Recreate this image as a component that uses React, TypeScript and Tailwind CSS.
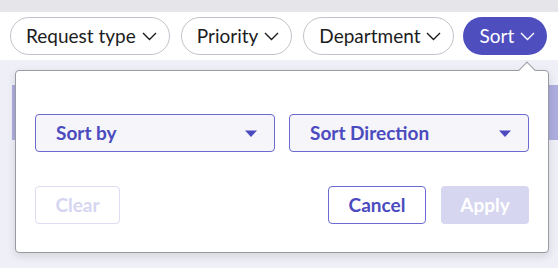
const filters = ["Request type", "Priority", "Department"];

function Chevron() {
  return (
    <svg width="15" height="9" viewBox="0 0 15 9" className="shrink-0" fill="none">
      <path d="M1 1 L7.5 7.5 L14 1" stroke="currentColor" strokeWidth="1.4" />
    </svg>
  );
}

function Caret() {
  return (
    <svg width="14" height="9" viewBox="0 0 14 9" className="shrink-0">
      <path d="M1 1.5 L13 1.5 L7 8 Z" fill="#4b4bbf" />
    </svg>
  );
}

export default function App() {
  return (
    <div
      className="relative h-[268px] w-[558px] overflow-hidden bg-[#efeff7]"
      style={{ fontFamily: "Lato, 'Noto Sans', sans-serif" }}
    >
      <div className="h-[12px] bg-[#e5e5ea]" />
      <div className="flex h-[48px] items-center gap-[11px] bg-white pl-[10px]">
        {filters.map((f) => (
          <button
            key={f}
            className="flex h-[38px] items-center gap-[6px] rounded-full border border-[#c2c2ca] bg-white pl-[15px] pr-[12px] text-[19px] text-[#1c1c1e]"
          >
            {f}
            <Chevron />
          </button>
        ))}
        <button className="-ml-[2px] flex h-[38px] items-center gap-[6px] rounded-full bg-[#4e4ebf] pl-[16px] pr-[12px] text-[19px] text-white">
          Sort
          <Chevron />
        </button>
      </div>

      {/* row behind the popover */}
      <div className="absolute left-[12px] right-0 top-[85px] h-[55px] bg-[#adaddf]" />

      <div className="absolute left-[15px] top-[70px] w-[534px] rounded-[4px] border border-[#9a9aa4] bg-white px-[19px] pb-[28px] pt-[43px] shadow-[0_3px_8px_rgba(0,0,0,0.12)]">
        <div className="absolute -top-[7px] left-[505px] h-[12px] w-[12px] rotate-45 border-l border-t border-[#9a9aa4] bg-white" />
        <div className="flex gap-[14px]">
          {["Sort by", "Sort Direction"].map((s) => (
            <div
              key={s}
              className="flex h-[38px] flex-1 items-center justify-between rounded-[4px] border border-[#6a6ad0] bg-[#f5f5fa] pl-[20px] pr-[16px] text-[19px] font-bold text-[#4b4bbf]"
            >
              {s}
              <Caret />
            </div>
          ))}
        </div>
        <div className="mt-[34px] flex items-center">
          <button className="h-[38px] w-[85px] rounded-[4px] border border-[#dcdcf2] text-[19px] font-bold text-[#d6d6f2]">
            Clear
          </button>
          <button className="ml-auto h-[38px] w-[98px] rounded-[4px] border border-[#6a6ad0] text-[19px] font-bold text-[#4b4bbf]">
            Cancel
          </button>
          <button className="ml-[15px] h-[38px] w-[88px] rounded-[4px] bg-[#d6d6f0] text-[19px] font-bold text-white">
            Apply
          </button>
        </div>
      </div>
    </div>
  );
}
